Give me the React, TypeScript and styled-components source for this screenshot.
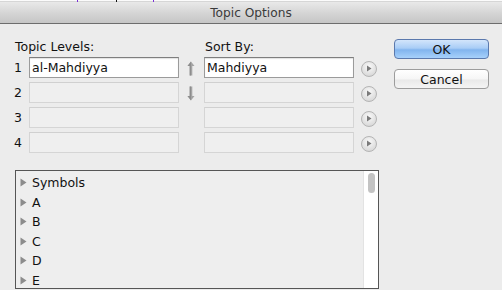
import React from "react";
import styled, { createGlobalStyle } from "styled-components";

const Global = createGlobalStyle`
  html, body {
    margin: 0;
    padding: 0;
    background: #ececec;
  }
  body {
    font-family: "DejaVu Sans", "Liberation Sans", sans-serif;
    font-size: 12.5px;
    color: #111;
  }
`;

const Window = styled.div`
  width: 502px;
  height: 290px;
  overflow: hidden;
  background: #ececec;
  display: flex;
  flex-direction: column;
`;

const TopStrip = styled.div`
  height: 2px;
  background: #fbfbfb;
  border-bottom: 1px solid #d6d6d6;
  box-sizing: border-box;
  position: relative;
`;

const Mark = styled.span<{ $x: number; $c: string }>`
  position: absolute;
  top: 0;
  left: ${(p) => p.$x}px;
  width: 1px;
  height: 2px;
  background: ${(p) => p.$c};
`;

const TitleBar = styled.div`
  height: 21px;
  border-bottom: 1px solid #6d6d6d;
  background: linear-gradient(#e9e9e9, #d2d2d2 60%, #c6c6c6);
  display: flex;
  align-items: center;
  justify-content: center;
  font-size: 12.2px;
  color: #3a3a3a;
`;

const Body = styled.div`
  display: grid;
  grid-template-columns: 364px 95px;
  column-gap: 16px;
  padding: 15px 0 0 14px;
  align-items: start;
`;

const Form = styled.div`
  display: grid;
  grid-template-columns: 15px 150px 25px 150px 24px;
  grid-template-rows: 14px repeat(4, 21px);
  row-gap: 4px;
  align-items: center;
`;

const Label = styled.div<{ $col: number }>`
  grid-column: ${(p) => p.$col} / span 2;
  align-self: start;
  line-height: 16px;
  height: 14px;
  padding-left: 1px;
  white-space: nowrap;
`;

const Num = styled.div`
  padding-left: 0;
`;

const Field = styled.div<{ $on?: boolean }>`
  height: 21px;
  box-sizing: border-box;
  border: 1px solid ${(p) => (p.$on ? "#9b9b9b" : "#d5d5d5")};
  border-top-color: ${(p) => (p.$on ? "#7e7e7e" : "#d0d0d0")};
  background: ${(p) => (p.$on ? "#ffffff" : "#efefef")};
  box-shadow: ${(p) => (p.$on ? "inset 0 1px 1px rgba(0,0,0,0.12)" : "none")};
  padding: 0 2px;
  line-height: 19px;
  white-space: nowrap;
`;

const ArrowCell = styled.div`
  display: flex;
  justify-content: center;
  padding-right: 2px;
  padding-top: 2px;
`;

const CircleCell = styled.div`
  display: flex;
  justify-content: flex-end;
`;

const Circle = styled.div`
  width: 14px;
  height: 14px;
  border-radius: 50%;
  border: 1px solid #b4b4b4;
  background: radial-gradient(circle at 50% 35%, #fafafa, #dcdcdc 70%, #cfcfcf);
  display: flex;
  align-items: center;
  justify-content: center;
  margin-top: 2px;
  margin-right: 1px;
`;

const Buttons = styled.div`
  display: flex;
  flex-direction: column;
  gap: 10px;
`;

const Button = styled.div<{ $primary?: boolean }>`
  height: 20px;
  box-sizing: border-box;
  border-radius: 4px;
  border: 1px solid ${(p) => (p.$primary ? "#5b79ad" : "#9c9c9c")};
  background: ${(p) =>
    p.$primary
      ? "linear-gradient(#d3e5fb, #a9cdf6 45%, #82b4ee 55%, #a7d1fb)"
      : "linear-gradient(#ffffff, #f6f6f6 50%, #e9e9e9 55%, #f4f4f4)"};
  display: flex;
  align-items: center;
  justify-content: center;
  font-size: 12.5px;
  color: #111;
`;

const ListBox = styled.div`
  margin: 17px 0 0 15px;
  width: 364px;
  height: 119px;
  box-sizing: border-box;
  border: 1px solid #555;
  background: #eeeeee;
  display: flex;
`;

const Items = styled.div`
  flex: 1;
  padding-top: 2px;
`;

const Item = styled.div`
  height: 19.5px;
  display: flex;
  align-items: center;
  gap: 5px;
  padding-left: 4px;
`;

const Track = styled.div`
  width: 14px;
  background: #ffffff;
  border-left: 1px solid #e3e3e3;
  display: flex;
  justify-content: center;
  padding-top: 2px;
`;

const Thumb = styled.div`
  width: 7px;
  height: 20px;
  border-radius: 4px;
  background: #c3c3c3;
`;

const UpArrow = () => (
  <svg width="8" height="15" viewBox="0 0 8 15">
    <path d="M4 0.5 L7.5 5 L5.3 5 L5.3 14.5 L2.7 14.5 L2.7 5 L0.5 5 Z" fill="#a4a4a4" />
    <path d="M4 0.5 L4 14.5 L2.7 14.5 L2.7 5 L0.5 5 Z" fill="#8d8d8d" />
  </svg>
);

const DownArrow = () => (
  <svg width="8" height="15" viewBox="0 0 8 15">
    <path d="M4 14.5 L7.5 10 L5.3 10 L5.3 0.5 L2.7 0.5 L2.7 10 L0.5 10 Z" fill="#a4a4a4" />
    <path d="M4 14.5 L4 0.5 L2.7 0.5 L2.7 10 L0.5 10 Z" fill="#8d8d8d" />
  </svg>
);

const Play = () => (
  <svg width="6" height="7" viewBox="0 0 6 7">
    <path d="M1 0.5 L5.5 3.5 L1 6.5 Z" fill="#7a7a7a" />
  </svg>
);

const Disclosure = () => (
  <svg width="7" height="9" viewBox="0 0 7 9">
    <path d="M0.5 0.5 L6.5 4.5 L0.5 8.5 Z" fill="#8c8c8c" />
  </svg>
);

const rows = [
  { n: 1, level: "al-Mahdiyya", sort: "Mahdiyya" },
  { n: 2, level: "", sort: "" },
  { n: 3, level: "", sort: "" },
  { n: 4, level: "", sort: "" },
];

const entries = ["Symbols", "A", "B", "C", "D", "E"];

export default function App() {
  return (
    <Window>
      <Global />
      <TopStrip>
        <Mark $x={77} $c="#7b2fd6" />
        <Mark $x={116} $c="#111" />
        <Mark $x={153} $c="#7b2fd6" />
      </TopStrip>
      <TitleBar>Topic Options</TitleBar>
      <Body>
        <Form>
          <Label $col={1}>Topic Levels:</Label>
          <div />
          <Label $col={4}>Sort By:</Label>
          {rows.map((r) => (
            <React.Fragment key={r.n}>
              <Num>{r.n}</Num>
              <Field $on={r.n === 1}>{r.level}</Field>
              <ArrowCell>
                {r.n === 1 ? <UpArrow /> : r.n === 2 ? <DownArrow /> : null}
              </ArrowCell>
              <Field $on={r.n === 1}>{r.sort}</Field>
              <CircleCell>
                <Circle>
                  <Play />
                </Circle>
              </CircleCell>
            </React.Fragment>
          ))}
        </Form>
        <Buttons>
          <Button $primary>OK</Button>
          <Button>Cancel</Button>
        </Buttons>
      </Body>
      <ListBox>
        <Items>
          {entries.map((e) => (
            <Item key={e}>
              <Disclosure />
              <span>{e}</span>
            </Item>
          ))}
        </Items>
        <Track>
          <Thumb />
        </Track>
      </ListBox>
    </Window>
  );
}
